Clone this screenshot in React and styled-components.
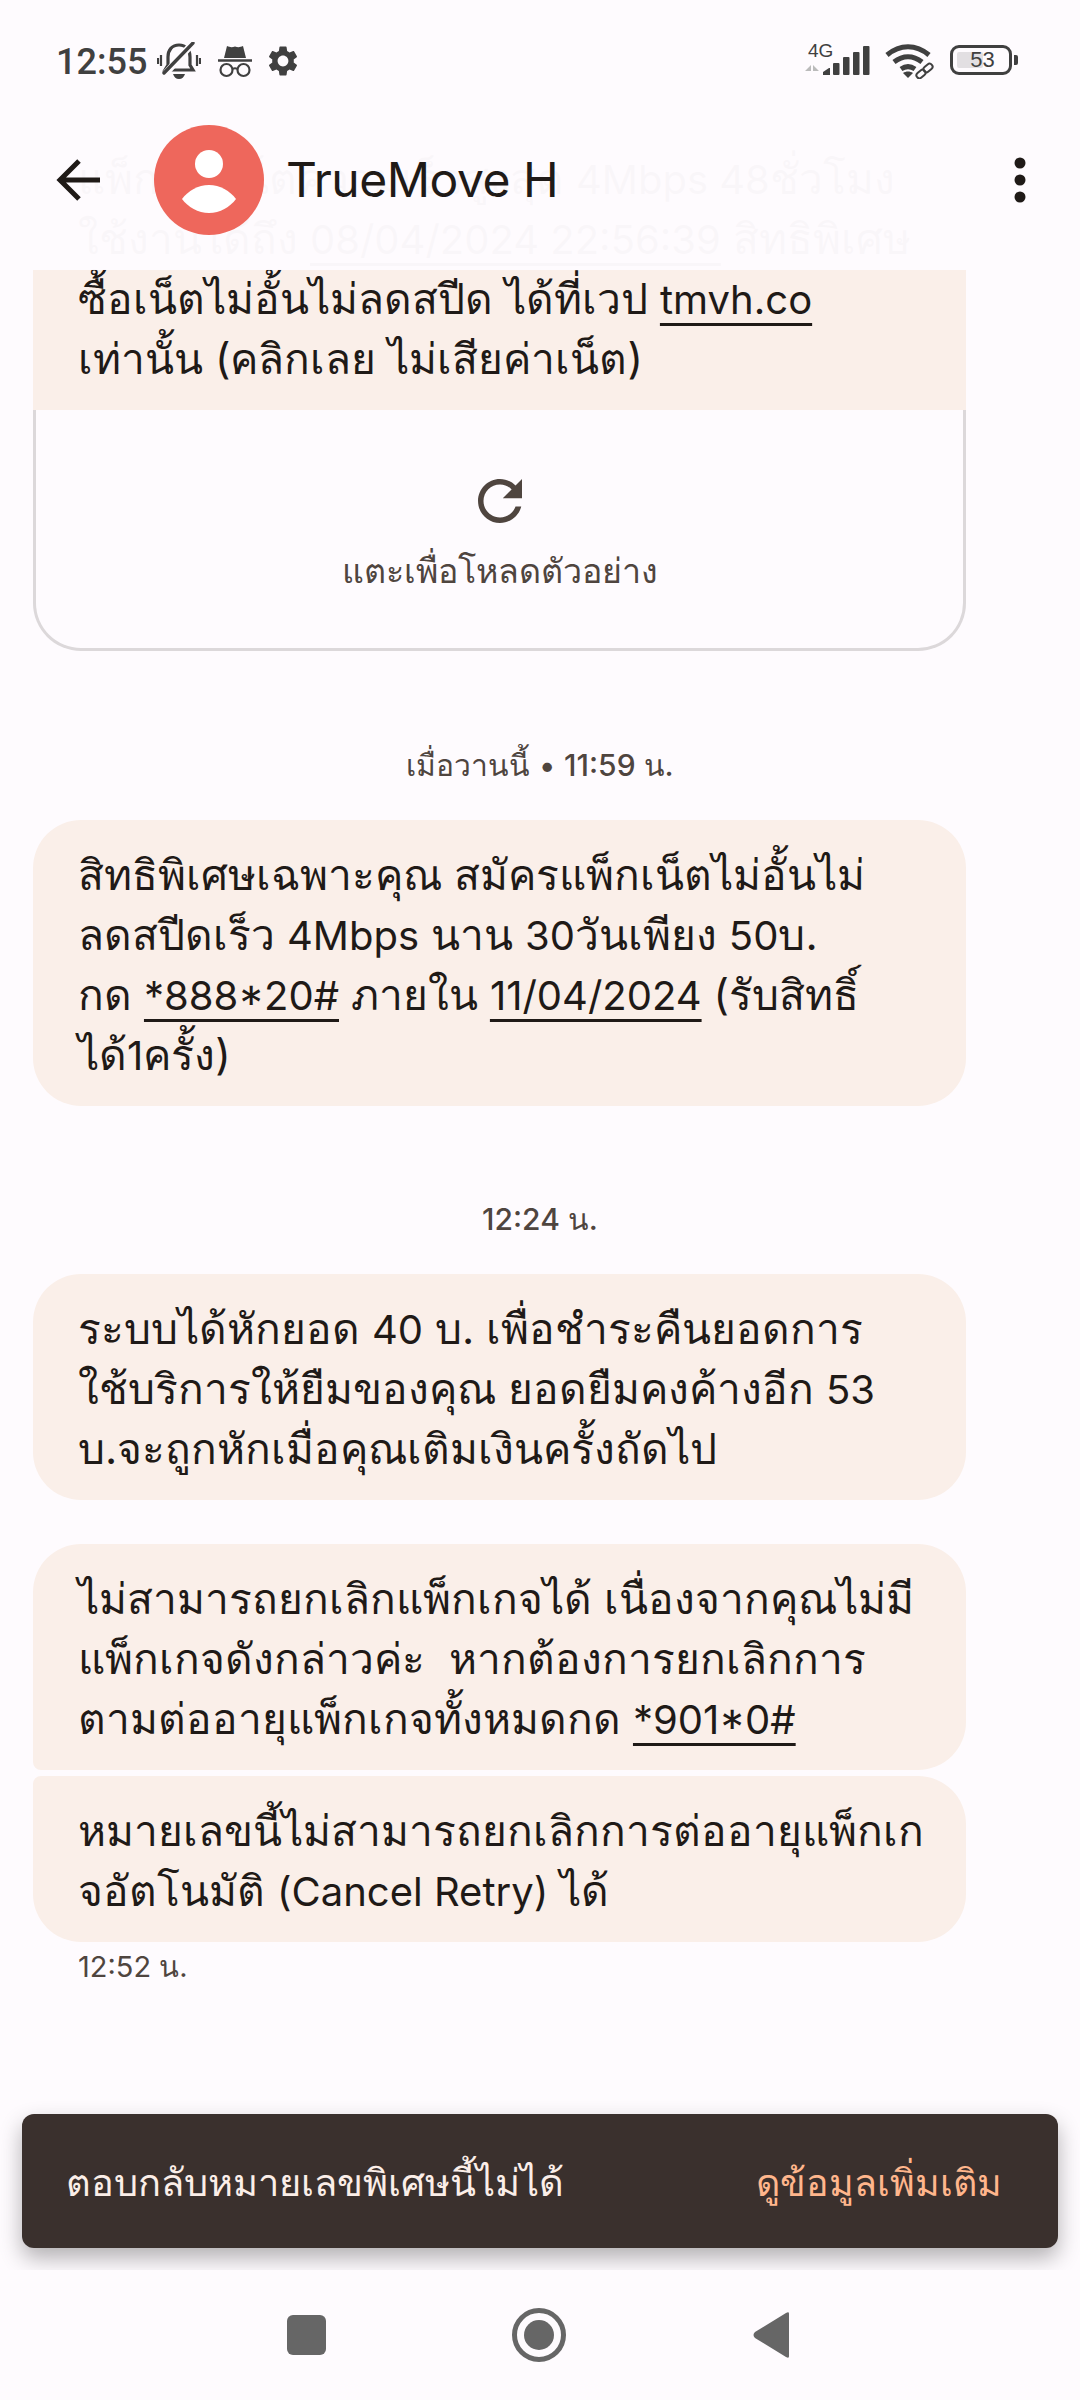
import styled, { createGlobalStyle } from 'styled-components'

const GlobalStyle = createGlobalStyle`
  html, body {
    margin: 0;
    padding: 0;
    background: #fefbfe;
  }
  * { box-sizing: border-box; }
`

const Screen = styled.div`
  position: relative;
  width: 1080px;
  height: 2400px;
  display: flex;
  flex-direction: column;
  overflow: hidden;
  background: #fefbfe;
  font-family: "Inter", "Noto Sans", sans-serif;
  color: #1f1a17;
`

const StatusBar = styled.div`
  height: 124px;
  flex: none;
  display: flex;
  justify-content: space-between;
  padding: 42px 66px 0 56px;
  color: #404040;
`
const StatusGroup = styled.div`
  display: flex;
  align-items: flex-start;
`
const Clock = styled.span`
  font-family: "Roboto", sans-serif;
  font-size: 36px;
  line-height: 40px;
  font-weight: 500;
  width: 101px;
`
const SignalWrap = styled.div`
  position: relative;
  width: 68px;
  height: 34px;
`
const NetLabel = styled.span`
  position: absolute;
  left: 5px;
  top: -1px;
  font-family: "Liberation Sans", sans-serif;
  font-size: 19px;
  line-height: 19px;
`
const Battery = styled.div`
  position: relative;
  width: 62px;
  height: 30px;
  margin: 3px 2px 0 15px;
  border: 3px solid #404040;
  border-radius: 9px;
  font-family: "Liberation Sans", sans-serif;
  font-size: 22px;
  line-height: 24px;
  text-align: center;
  &::before {
    content: '';
    position: absolute;
    left: 4px;
    top: 4px;
    bottom: 4px;
    width: 26px;
    background: #e2dfe2;
    border-radius: 2px;
  }
  &::after {
    content: '';
    position: absolute;
    right: -9px;
    top: 7px;
    width: 4px;
    height: 10px;
    background: #404040;
    border-radius: 0 2px 2px 0;
  }
`
const BatteryValue = styled.span`
  position: relative;
  z-index: 1;
  padding-left: 3px;
`

const Header = styled.header`
  position: absolute;
  z-index: 3;
  left: 0;
  right: 0;
  top: 124px;
  height: 146px;
  display: flex;
  align-items: center;
  padding: 0 54px 35px 56px;
  background: rgba(254, 251, 254, 0.98);
`
const Avatar = styled.svg`
  width: 110px;
  height: 110px;
  margin: 0 22px 0 54px;
  flex: none;
`
const Name = styled.h1`
  margin: 0;
  flex: 1;
  font-size: 48px;
  line-height: 56px;
  font-weight: 400;
  letter-spacing: -0.5px;
`

const Thread = styled.main`
  flex: 1;
  min-height: 0;
  display: flex;
  flex-direction: column;
`
const Bubble = styled.div`
  width: 933px;
  height: ${p => p.$lines * 60 + 46}px;
  margin-left: 33px;
  padding: 25px 20px 0 45px;
  background: #faefe9;
  font-size: 42.5px;
  line-height: 60px;
  white-space: nowrap;
  border-radius: ${p => p.$radius || '48px'};
  margin-top: ${p => p.$top || 0}px;
`
// latin runs sit a bit smaller than the thai around them
const Num = styled.span`
  font-size: 40px;
  line-height: 1;
`
const Link = styled(Num)`
  text-decoration: underline;
  text-decoration-thickness: 3px;
  text-underline-offset: 9px;
`
const MediaCard = styled.div`
  width: 933px;
  height: 241px;
  margin-left: 33px;
  display: flex;
  flex-direction: column;
  align-items: center;
  padding-top: 58px;
  border: 3px solid #dcd8da;
  border-top: 0;
  border-radius: 0 0 48px 48px;
  color: #4f453f;
`
const RefreshIcon = styled.svg`
  width: 66px;
  height: 66px;
  fill: currentColor;
`
const MediaLabel = styled.span`
  margin-top: 12px;
  font-size: 34px;
  line-height: 50px;
`
const Stamp = styled.div`
  height: 44px;
  margin-top: ${p => p.$top}px;
  margin-bottom: ${p => p.$bottom}px;
  padding-left: ${p => (p.$left ? '78px' : 0)};
  text-align: ${p => (p.$left ? 'left' : 'center')};
  font-size: ${p => (p.$left ? 29 : 30)}px;
  line-height: 44px;
  color: #4f453f;
`
const Strong = styled.span`
  font-weight: 500;
`

const Snackbar = styled.div`
  position: absolute;
  z-index: 2;
  left: 22px;
  right: 22px;
  top: 2114px;
  height: 134px;
  display: flex;
  align-items: center;
  justify-content: space-between;
  padding: 3px 56px 0 44px;
  background: #3a302d;
  border-radius: 12px;
  box-shadow: 0 10px 22px rgba(0, 0, 0, 0.3);
  font-size: 38px;
  color: #fbeee8;
`
const SnackAction = styled.span`
  font-size: 37.5px;
  color: #ffb68c;
`

const NavBar = styled.nav`
  position: relative;
  z-index: 4;
  height: 130px;
  flex: none;
  display: flex;
  align-items: center;
  padding-left: 287px;
  background: #fefbfe;
`
const NavSquare = styled.div`
  width: 39px;
  height: 40px;
  margin-right: 186px;
  background: #666;
  border-radius: 6px;
`
const NavCircle = styled.div`
  width: 54px;
  height: 54px;
  margin-right: 187px;
  border: 5px solid #666;
  border-radius: 50%;
  display: flex;
  align-items: center;
  justify-content: center;
  &::after {
    content: '';
    width: 30px;
    height: 30px;
    border-radius: 50%;
    background: #666;
  }
`
const NavBack = styled.svg`
  width: 36px;
  height: 46px;
  fill: #666;
`

function BellOff() {
  return (
    <svg width="44" height="38" viewBox="0 0 44 38">
      <path d="M22 3c-7 0-11 5-11 12v8l-3 5h28l-3-5v-8c0-7-4-12-11-12z" fill="none" stroke="currentColor" strokeWidth="3.2" />
      <path d="M16 32h12c-1 3-3 5-6 5s-5-2-6-5z" fill="currentColor" />
      <path d="M9 31 35 2" stroke="#fefbfe" strokeWidth="7" />
      <path d="M7 31 36 1" stroke="currentColor" strokeWidth="3.4" strokeLinecap="round" />
      <path d="M4 13v11M1 16v6M40 13v11M43 16v6" stroke="currentColor" strokeWidth="2.2" />
    </svg>
  )
}

function Incognito() {
  return (
    <svg width="36" height="34" viewBox="0 0 36 34" style={{ margin: '2px 0 0 16px' }}>
      <path d="M7 14 10 2c3 1.400 5 1.400 8 .6 3 .8 5 .8 8-.6l3 12z" fill="currentColor" />
      <path d="M1 16.500h34" stroke="currentColor" strokeWidth="2.6" />
      <circle cx="9.500" cy="26" r="6" fill="none" stroke="currentColor" strokeWidth="2.2" />
      <circle cx="26.500" cy="26" r="6" fill="none" stroke="currentColor" strokeWidth="2.2" />
      <path d="M15.500 25c1.600-1 3.400-1 5 0" fill="none" stroke="currentColor" strokeWidth="2" />
    </svg>
  )
}

function Gear() {
  return (
    <svg width="36" height="36" viewBox="0 0 24 24" fill="currentColor" style={{ margin: '1px 0 0 12px' }}>
      <path d="M19.14 12.94c.04-.3.06-.61.06-.94 0-.32-.02-.64-.07-.94l2.03-1.58c.18-.14.23-.41.12-.61l-1.92-3.32c-.12-.22-.37-.29-.59-.22l-2.39.96c-.5-.38-1.03-.7-1.62-.94l-.36-2.54c-.04-.24-.24-.41-.48-.41h-3.84c-.24 0-.43.17-.47.41l-.36 2.54c-.59.24-1.13.57-1.62.94l-2.39-.96c-.22-.08-.47 0-.59.22L2.74 8.87c-.12.21-.08.47.12.61l2.03 1.58c-.05.3-.09.63-.09.94s.02.64.07.94l-2.03 1.58c-.18.14-.23.41-.12.61l1.92 3.32c.12.22.37.29.59.22l2.39-.96c.5.38 1.03.7 1.62.94l.36 2.54c.05.24.24.41.48.41h3.84c.24 0 .44-.17.47-.41l.36-2.54c.59-.24 1.13-.56 1.62-.94l2.39.96c.22.08.47 0 .59-.22l1.92-3.32c.12-.22.07-.47-.12-.61l-2.01-1.58zM12 15.6c-1.98 0-3.6-1.62-3.6-3.6s1.62-3.6 3.6-3.6 3.6 1.62 3.6 3.6-1.62 3.6-3.6 3.6z" />
    </svg>
  )
}

function SignalBars() {
  return (
    <svg width="68" height="34" viewBox="0 0 68 34" fill="currentColor" style={{ position: 'absolute', left: 0, top: 0 }}>
      <path d="M8 33V23l-6 6h6zM10 33V23l6 6h-6z" fill="#bbb" />
      <path d="M20 33v-3l6-4h1v7z" />
      <rect x="30" y="21" width="6.500" height="12" rx="1" />
      <rect x="40" y="15" width="6.500" height="18" rx="1" />
      <rect x="50" y="10" width="6.500" height="23" rx="1" />
      <rect x="60" y="4" width="6.500" height="29" rx="1" />
    </svg>
  )
}

function Wifi() {
  return (
    <svg width="50" height="36" viewBox="0 0 50 36" fill="none" stroke="currentColor" style={{ margin: '1px 0 0 14px' }}>
      <path d="M2 12C15 1 31 1 44 12" strokeWidth="5" />
      <path d="M9 19C18 12 28 12 37 19" strokeWidth="5" />
      <path d="M16 26c4.500-3 9.500-3 14 0" strokeWidth="5" />
      <path d="M23 35 18 30c3-2 7-2 10 0z" fill="currentColor" stroke="none" />
      <rect x="31" y="28" width="10" height="6" rx="3" transform="rotate(-40 36 31)" strokeWidth="2" />
      <rect x="38" y="22" width="10" height="6" rx="3" transform="rotate(-40 43 25)" strokeWidth="2" />
    </svg>
  )
}

export default function App() {
  return (
    <Screen>
      <GlobalStyle />
      <StatusBar>
        <StatusGroup>
          <Clock>12:55</Clock>
          <BellOff />
          <Incognito />
          <Gear />
        </StatusGroup>
        <StatusGroup>
          <SignalWrap>
            <NetLabel>4G</NetLabel>
            <SignalBars />
          </SignalWrap>
          <Wifi />
          <Battery><BatteryValue>53</BatteryValue></Battery>
        </StatusGroup>
      </StatusBar>

      <Header>
        <svg width="44" height="44" viewBox="0 0 44 44" fill="none" stroke="#1f1a17" strokeWidth="5">
          <path d="M44 22H4M23 3 4 22l19 19" />
        </svg>
        <Avatar viewBox="0 0 110 110">
          <circle cx="55" cy="55" r="55" fill="#ee675c" />
          <circle cx="55" cy="39" r="14" fill="#fff" />
          <path d="M28 74C34 66 44 60 55 60s21 6 27 14c-6 8-16 14-27 14s-21-6-27-14z" fill="#fff" />
        </Avatar>
        <Name>TrueMove H</Name>
        <svg width="12" height="46" viewBox="0 0 12 46" fill="#1f1a17">
          <circle cx="6" cy="6" r="5.500" />
          <circle cx="6" cy="23" r="5.500" />
          <circle cx="6" cy="40" r="5.500" />
        </svg>
      </Header>

      <Thread>
        <Bubble $lines={4} $radius="48px 48px 0 0">
          แพ็กเกจเน็ตความเร็วสูงสุด <Num>4Mbps 48</Num>ชั่วโมง<br />
          ใช้งานได้ถึง <Link>08/04/2024 22:56:39</Link> สิทธิพิเศษ<br />
          ซื้อเน็ตไม่อั้นไม่ลดสปีด ได้ที่เวป <Link>tmvh.co</Link><br />
          เท่านั้น (คลิกเลย ไม่เสียค่าเน็ต)
        </Bubble>
        <MediaCard>
          <RefreshIcon viewBox="0 0 24 24">
            <path d="M17.65 6.35C16.2 4.9 14.21 4 12 4c-4.420 0-7.990 3.580-7.990 8s3.570 8 7.990 8c3.730 0 6.840-2.550 7.730-6h-2.080c-.82 2.330-3.040 4-5.650 4-3.310 0-6-2.690-6-6s2.690-6 6-6c1.660 0 3.140.69 4.220 1.780L13 11h7V4l-2.350 2.350z" />
          </RefreshIcon>
          <MediaLabel>แตะเพื่อโหลดตัวอย่าง</MediaLabel>
        </MediaCard>

        <Stamp $top={92} $bottom={33}>เมื่อวานนี้ • <Strong>11:59 น.</Strong></Stamp>
        <Bubble $lines={4}>
          สิทธิพิเศษเฉพาะคุณ สมัครแพ็กเน็ตไม่อั้นไม่<br />
          ลดสปีดเร็ว <Num>4Mbps</Num> นาน <Num>30</Num>วันเพียง <Num>50</Num>บ.<br />
          กด <Link>*888*20#</Link> ภายใน <Link>11/04/2024</Link> (รับสิทธิ์<br />
          ได้<Num>1</Num>ครั้ง)
        </Bubble>

        <Stamp $top={91} $bottom={33}><Strong>12:24 น.</Strong></Stamp>
        <Bubble $lines={3}>
          ระบบได้หักยอด <Num>40</Num> บ. เพื่อชำระคืนยอดการ<br />
          ใช้บริการให้ยืมของคุณ ยอดยืมคงค้างอีก <Num>53</Num><br />
          บ.จะถูกหักเมื่อคุณเติมเงินครั้งถัดไป
        </Bubble>

        <Bubble $lines={3} $top={44} $radius="48px 48px 48px 8px">
          ไม่สามารถยกเลิกแพ็กเกจได้ เนื่องจากคุณไม่มี<br />
          แพ็กเกจดังกล่าวค่ะ&nbsp; หากต้องการยกเลิกการ<br />
          ตามต่ออายุแพ็กเกจทั้งหมดกด <Link>*901*0#</Link>
        </Bubble>
        <Bubble $lines={2} $top={6} $radius="8px 48px 48px 48px">
          หมายเลขนี้ไม่สามารถยกเลิกการต่ออายุแพ็กเก<br />
          จอัตโนมัติ <Num>(Cancel Retry)</Num> ได้
        </Bubble>
        <Stamp $left $top={3} $bottom={0}>12:52 น.</Stamp>
      </Thread>

      <Snackbar>
        <span>ตอบกลับหมายเลขพิเศษนี้ไม่ได้</span>
        <SnackAction>ดูข้อมูลเพิ่มเติม</SnackAction>
      </Snackbar>

      <NavBar>
        <NavSquare />
        <NavCircle />
        <NavBack viewBox="0 0 36 46">
          <path d="M36 2v42c0 2-1 2-3 1L2 26c-2-2-2-4 0-6L33 1c2-1 3-1 3 1z" />
        </NavBack>
      </NavBar>
    </Screen>
  )
}
